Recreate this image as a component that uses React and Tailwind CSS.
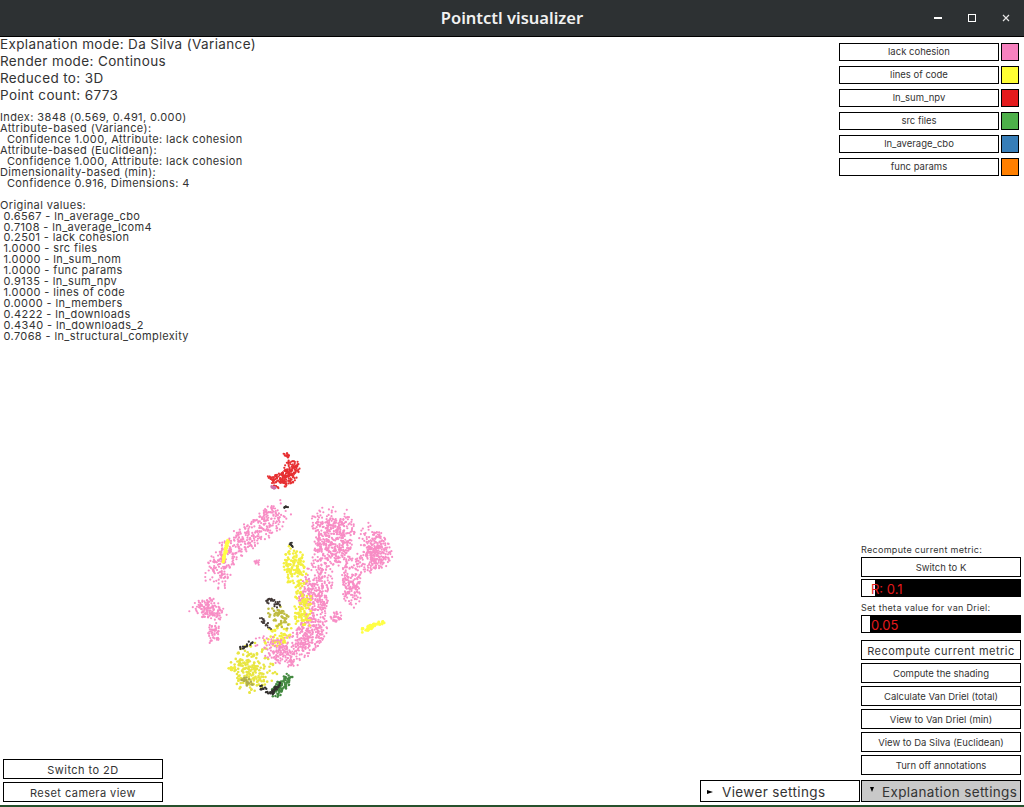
import { useMemo } from "react";

const FONT = "font-['Inter','Noto_Sans',sans-serif]";

const legend = [
  ["lack cohesion", "bg-[#f781bf]"],
  ["lines of code", "bg-[#ffff33]"],
  ["ln_sum_npv", "bg-[#e41a1c]"],
  ["src files", "bg-[#4daf4a]"],
  ["ln_average_cbo", "bg-[#377eb8]"],
  ["func params", "bg-[#ff7f00]"],
];

const explain = [
  "Index: 3848 (0.569, 0.491, 0.000)",
  "Attribute-based (Variance):",
  "  Confidence 1.000, Attribute: lack cohesion",
  "Attribute-based (Euclidean):",
  "  Confidence 1.000, Attribute: lack cohesion",
  "Dimensionality-based (min):",
  "  Confidence 0.916, Dimensions: 4",
  "",
  "Original values:",
  " 0.6567 - ln_average_cbo",
  " 0.7108 - ln_average_lcom4",
  " 0.2501 - lack cohesion",
  " 1.0000 - src files",
  " 1.0000 - ln_sum_nom",
  " 1.0000 - func params",
  " 0.9135 - ln_sum_npv",
  " 1.0000 - lines of code",
  " 0.0000 - ln_members",
  " 0.4222 - ln_downloads",
  " 0.4340 - ln_downloads_2",
  " 0.7068 - ln_structural_complexity",
];

// strokes in the coordinates of the plot: colour, radius of the dots, spread, dots per stroke, line
const strokes = [
  ["#f781bf", 1.1, 13, 420, [[100, 72], [83, 87], [63, 100], [43, 117], [36, 140]]],
  ["#f781bf", 1.1, 9, 150, [[18, 170], [30, 167], [38, 175]]],
  ["#f781bf", 1.1, 6, 50, [[34, 185], [33, 200]]],
  ["#f781bf", 1.1, 3, 12, [[77, 120], [77, 124]]],
  ["#f781bf", 1.1, 15, 340, [[146, 80], [150, 100], [145, 123]]],
  ["#f781bf", 1.1, 15, 300, [[140, 135], [134, 155], [132, 172]]],
  ["#f781bf", 1.1, 15, 300, [[135, 185], [128, 200], [105, 212]]],
  ["#f781bf", 1.1, 9, 130, [[167, 76], [165, 100], [160, 118]]],
  ["#f781bf", 1.1, 13, 300, [[190, 95], [200, 115], [186, 122]]],
  ["#f781bf", 1.1, 10, 150, [[172, 130], [172, 160]]],
  ["#f781bf", 1.1, 6, 24, [[155, 115], [175, 125]]],
  ["#f781bf", 1.1, 6, 30, [[155, 175], [160, 180]]],
  ["#f2ee2a", 1.3, 11, 120, [[113, 115], [117, 140]]],
  ["#f2ee2a", 1.3, 9, 90, [[122, 155], [122, 182]]],
  ["#f2ee2a", 1.3, 10, 60, [[90, 198], [110, 190]]],
  ["#e6e32e", 1.3, 13, 190, [[78, 212], [62, 222], [68, 240], [88, 232]]],
  ["#f781bf", 1.1, 12, 120, [[85, 205], [112, 218]]],
  ["#ffff33", 1.4, 1.2, 40, [[48, 100], [43, 123]]],
  ["#ffff33", 1.4, 2.2, 50, [[203, 182], [182, 191]]],
  ["#f0ec30", 1.4, 2, 10, [[50, 229], [55, 229]]],
  ["#b9b52e", 1.3, 8, 50, [[95, 172], [103, 182]]],
  ["#a8a53a", 1.3, 4, 18, [[65, 240], [70, 243]]],
  ["#e41a1c", 1.1, 8, 200, [[113, 25], [108, 38], [97, 41]]],
  ["#e41a1c", 1, 2, 20, [[105, 14], [108, 16]]],
  ["#e41a1c", 1, 1.5, 20, [[88, 36], [96, 43]]],
  ["#c75fa0", 1.1, 1, 14, [[91, 47], [95, 48]]],
  ["#2f7d2c", 1.2, 6, 90, [[108, 238], [100, 247], [95, 255]]],
  ["#1c1a18", 1.1, 1.5, 8, [[105, 68], [107, 67]]],
  ["#1c1a18", 1, 1.5, 9, [[110, 103], [113, 106]]],
  ["#2c2220", 1.1, 4, 24, [[88, 160], [98, 165]]],
  ["#2c2220", 1, 3, 18, [[80, 177], [90, 187]]],
  ["#1c1a18", 1.1, 2, 16, [[60, 209], [72, 202]]],
  ["#1c1a18", 1.2, 2.5, 30, [[80, 247], [90, 253], [100, 245]]],
];

function makeDots() {
  let seed = 3848;
  const rnd = () => {
    seed = (seed * 16807) % 2147483647;
    return seed / 2147483647;
  };
  const dots = [];
  strokes.forEach(([color, r, spread, count, line]) => {
    for (let i = 0; i < count; i++) {
      const at = rnd() * (line.length - 1);
      const k = Math.min(Math.floor(at), line.length - 2);
      const t = at - k;
      const angle = rnd() * Math.PI * 2;
      const dist = spread * Math.sqrt(rnd());
      dots.push({
        x: line[k][0] + (line[k + 1][0] - line[k][0]) * t + Math.cos(angle) * dist,
        y: line[k][1] + (line[k + 1][1] - line[k][1]) * t + Math.sin(angle) * dist,
        r,
        color,
      });
    }
  });
  return dots;
}

const Btn = ({ className = "", children }) => (
  <div className={`flex items-center justify-center border border-black bg-white text-[#333] ${className}`}>
    {children}
  </div>
);

const Slider = ({ thumb, label }) => (
  <div className="relative h-[18px] w-[160px] border border-black bg-black">
    <div className={`h-full bg-white ${thumb}`} />
    <span className="absolute left-[9px] top-[-2px] text-[13px] leading-[22px] text-[#e41a1c]">{label}</span>
  </div>
);

export default function App() {
  const dots = useMemo(makeDots, []);

  return (
    <div className={`flex h-[807px] w-[1024px] flex-col overflow-hidden bg-white ${FONT}`}>
      <header className="relative flex h-[37px] shrink-0 items-center justify-center border-b border-black bg-[#2d3133]">
        <h1 className="font-['Noto_Sans',sans-serif] text-[16.5px] font-semibold text-[#f1f1f1]">Pointctl visualizer</h1>
        <div className="absolute right-[14px] top-[14px] flex items-center gap-[26px]">
          <div className="h-[1.5px] w-[8px] bg-white" />
          <div className="h-[8px] w-[8px] border-[1.5px] border-white" />
          <svg width="8" height="8" viewBox="0 0 8 8" className="text-[#e6e6e6]">
            <path d="M1 1l6 6M7 1l-6 6" stroke="currentColor" strokeWidth="1.2" />
          </svg>
        </div>
      </header>

      <main className="relative flex min-h-0 flex-1 justify-between">
        <section className="flex flex-col pb-[3px]">
          <div className="-mt-px text-[13.5px] leading-[17px] tracking-[0.37px] text-[#333]">
            <p>Explanation mode: Da Silva (Variance)</p>
            <p>Render mode: Continous</p>
            <p>Reduced to: 3D</p>
            <p>Point count: 6773</p>
          </div>
          <pre className={`mt-[8px] text-[11px] leading-[10.95px] tracking-[0.38px] text-[#333] ${FONT}`}>{explain.join("\n")}</pre>
          <div className="mt-auto flex flex-col gap-[3px] pl-[3px] tracking-[0.45px]">
            <Btn className="h-[20px] w-[160px] pt-[2px] text-[11px]">Switch to 2D</Btn>
            <Btn className="h-[20px] w-[160px] pt-[2px] text-[11px]">Reset camera view</Btn>
          </div>
        </section>

        <section className="flex flex-col items-end pb-[3px] pr-[3px] pt-[6px]">
          <div className="flex flex-col gap-[5px] pr-[2px]">
            {legend.map(([name, swatch]) => (
              <div key={name} className="flex gap-[2px]">
                <Btn className="h-[18px] w-[160px] pt-px text-[9.5px]">{name}</Btn>
                <div className={`h-[18px] w-[18px] border border-black ${swatch}`} />
              </div>
            ))}
          </div>

          <div className="mt-auto flex w-[160px] flex-col text-[9px] text-[#333]">
            <p className="mb-[1px] whitespace-nowrap leading-[12px] tracking-[0.3px]">Recompute current metric:</p>
            <Btn className="h-[20px] pt-[3px] text-[9.5px]">Switch to K</Btn>
            <div className="mt-[2px]"><Slider thumb="w-[13px]" label="R: 0.1" /></div>
            <p className="mb-[1px] mt-[5px] whitespace-nowrap leading-[12px] tracking-[0.3px]">Set theta value for van Driel:</p>
            <Slider thumb="w-[8px]" label="0.05" />
            <div className="mt-[7px] flex flex-col gap-[3px]">
              <Btn className="h-[20px] whitespace-nowrap pt-[2px] text-[11px] tracking-[0.5px]">Recompute current metric</Btn>
              <Btn className="h-[20px] pt-[3px] text-[9.5px]">Compute the shading</Btn>
              <Btn className="h-[20px] pt-[3px] text-[9.5px]">Calculate Van Driel (total)</Btn>
              <Btn className="h-[20px] pt-[3px] text-[9.5px]">View to Van Driel (min)</Btn>
              <Btn className="h-[20px] pt-[3px] text-[9.5px]">View to Da Silva (Euclidean)</Btn>
              <Btn className="h-[20px] pt-[3px] text-[9.5px]">Turn off annotations</Btn>
            </div>
          </div>

          <div className="mt-[5px] flex gap-[1px] text-[13.5px] tracking-[0.37px] text-[#333]">
            <div className="flex h-[22px] w-[160px] items-center gap-[9px] border border-black bg-white pl-[6px] pt-[2px]">
              <span className="h-0 w-0 border-y-[2.5px] border-l-[6px] border-y-transparent border-l-black" />
              Viewer settings
            </div>
            <div className="flex h-[22px] w-[160px] items-center gap-[8px] whitespace-nowrap border border-black bg-[#c9c9c9] pl-[8px] pt-[2px]">
              <span className="mb-[5px] h-0 w-0 border-x-[2.5px] border-t-[5px] border-x-transparent border-t-black" />
              Explanation settings
            </div>
          </div>
        </section>

        <svg viewBox="0 0 220 270" className="absolute left-[180px] top-[403px] h-[270px] w-[220px] blur-[0.4px]">
          <g opacity="0.9">
            {dots.map((d, i) => (
              <circle key={i} cx={d.x} cy={d.y} r={d.r} fill={d.color} />
            ))}
          </g>
        </svg>
      </main>

      <div className="h-[2px] shrink-0 bg-[#27512c]" />
    </div>
  );
}
